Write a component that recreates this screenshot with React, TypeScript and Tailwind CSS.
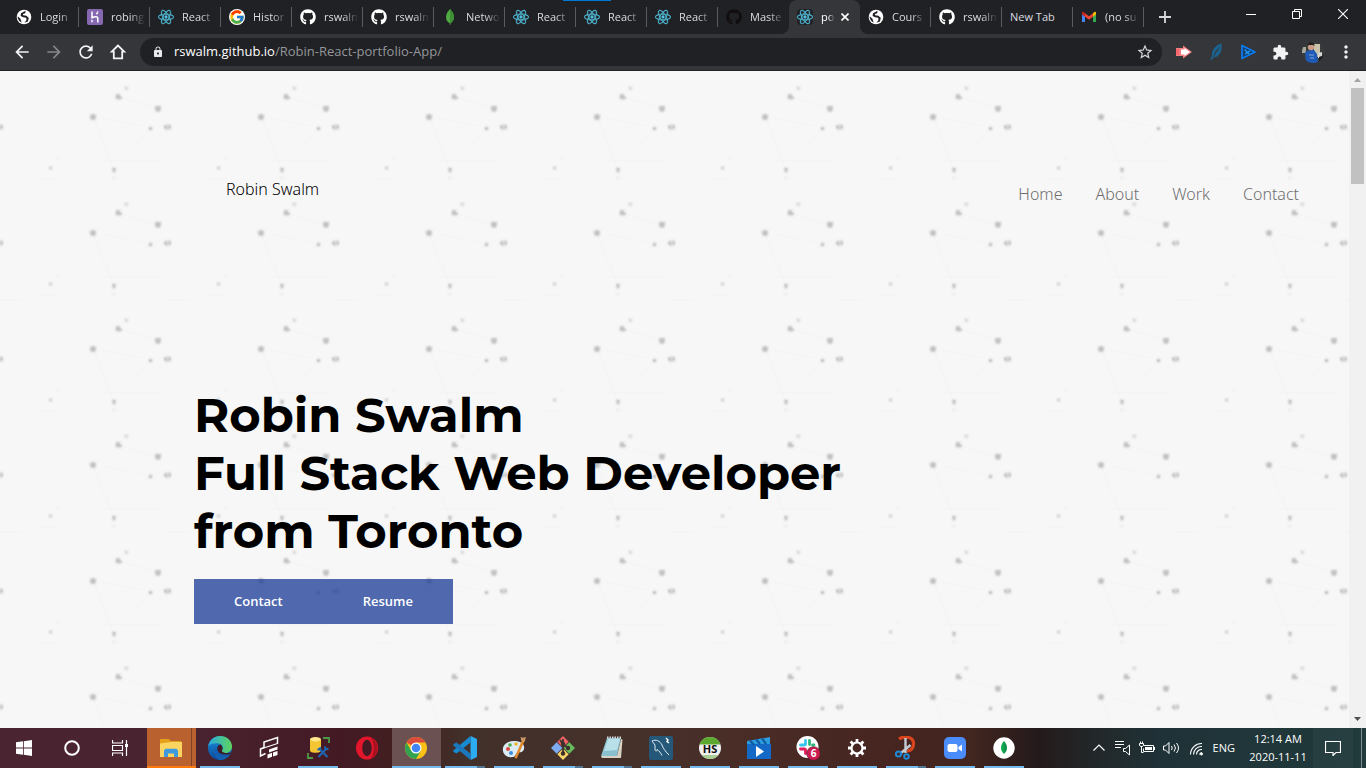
import type { ReactNode } from "react";
import { FaReact, FaGithub } from "react-icons/fa";
import { FcGoogle } from "react-icons/fc";
import { MdArrowBack, MdArrowForward, MdRefresh, MdLock, MdStarBorder, MdExtension, MdMoreVert } from "react-icons/md";

/* ---------- favicons ---------- */

const ReactMark = () => <FaReact className="size-4 stroke-[#53c1de] stroke-[12px] text-[#53c1de]" />;
const GithubMark = () => <FaGithub className="size-4 text-white" />;
const Leaf = ({ className }: { className: string }) => (
  <svg viewBox="0 0 16 16" className={className}>
    <path d="M8 0C5.600 2.600 4 5 4 8.200c0 2.900 1.700 4.800 3.700 6.100L7.800 16h.5l.2-1.700c2-1.500 3.500-3.400 3.500-6.100C12 5 10.400 2.600 8 0z" fill="#4faa41" />
    <path d="M8 0v14.400c2.300-1.600 4-3.400 4-6.200C12 5 10.400 2.600 8 0z" fill="#3f8f35" />
  </svg>
);
const Globe = () => (
  <svg viewBox="0 0 16 16" className="size-4">
    <circle cx="8" cy="8" r="7.300" fill="#fff" />
    <path d="M9.500 1.800 5 4.200 4.600 7l2.600 1.200 3 .6.3 2.200-2 2.800 3.400-1.400.9-3.400-2.300-2.200-3.300-.5-.3-1.300 2.400-.8z" fill="#202124" />
    <path d="M1.600 7.200 4.400 9.700l1.300 3.900A7 7 0 0 1 1.600 7.200z" fill="#202124" />
  </svg>
);
const Heroku = () => (
  <svg viewBox="0 0 16 16" className="size-4">
    <rect width="16" height="16" rx="2" fill="#8668b0" />
    <path d="M5 2.500v6.200c2.600-1.100 5.800-1.500 5.800.6v4.200M10.700 2.500c-.1 1.200-.6 2-1.400 2.800" fill="none" stroke="#fff" strokeWidth="1.500" />
    <path d="M4.300 10.500 6.500 12l-2.200 1.700z" fill="#fff" />
  </svg>
);
const Gmail = () => (
  <svg viewBox="0 0 16 16" className="size-4">
    <path d="M1 4v9h3V7z" fill="#4285f4" />
    <path d="M15 4v9h-3V7z" fill="#34a853" />
    <path d="M12 4.200 13.300 3c.9-.6 1.700 0 1.700 1v1.500l-3 2.300z" fill="#fbbc04" />
    <path d="M4 4.200 2.700 3C1.800 2.400 1 3 1 4v1.500l3 2.300z" fill="#c5221f" />
    <path d="M4 4.200 8 7.300l4-3.100v3.600l-4 3-4-3z" fill="#ea4335" />
  </svg>
);

type Tab = { title: string; icon?: ReactNode; active?: boolean; noLine?: boolean };

const tabs: Tab[] = [
  { title: "Login", icon: <Globe /> },
  { title: "robing", icon: <Heroku /> },
  { title: "React", icon: <ReactMark /> },
  { title: "Histor", icon: <FcGoogle className="size-4 rounded-full bg-white" /> },
  { title: "rswalm", icon: <GithubMark /> },
  { title: "rswalm", icon: <GithubMark /> },
  { title: "Netwo", icon: <Leaf className="size-4" /> },
  { title: "React", icon: <ReactMark /> },
  { title: "React", icon: <ReactMark /> },
  { title: "React", icon: <ReactMark /> },
  { title: "Maste", icon: <FaGithub className="size-4 text-[#120e0f]" />, noLine: true },
  { title: "po", icon: <span className="block rounded-sm bg-[#202124]"><ReactMark /></span>, active: true },
  { title: "Cours", icon: <Globe /> },
  { title: "rswalm", icon: <GithubMark /> },
  { title: "New Tab" },
  { title: "(no su", icon: <Gmail /> },
];

function BrowserTab({ tab }: { tab: Tab }) {
  if (tab.active) {
    return (
      <li className="relative flex h-[34px] w-[71px] items-center rounded-t-lg bg-[#35363a] pl-2 pr-3 text-white">
        <svg viewBox="0 0 8 8" className="absolute -left-2 bottom-0 size-2"><path d="M8 0v8H0a8 8 0 0 0 8-8z" fill="#35363a" /></svg>
        <svg viewBox="0 0 8 8" className="absolute -right-2 bottom-0 size-2"><path d="M0 0v8h8a8 8 0 0 1-8-8z" fill="#35363a" /></svg>
        <span className="mr-2 shrink-0">{tab.icon}</span>
        <span className="mr-1.5 w-[14px] shrink-0 whitespace-nowrap [mask-image:linear-gradient(to_right,black_50%,transparent)]">{tab.title}</span>
        <button aria-label="Close tab" className="shrink-0">
          <svg viewBox="0 0 8 8" className="size-2"><path d="M.5.500l7 7M7.500.500l-7 7" stroke="#fff" strokeWidth="1.600" /></svg>
        </button>
      </li>
    );
  }
  return (
    <li className="flex h-[34px] w-[71px] items-center">
      <a href="#tab" className="flex min-w-0 flex-1 items-center gap-2 pl-2">
        {tab.icon && <span className="shrink-0">{tab.icon}</span>}
        <span className={`min-w-0 flex-1 whitespace-nowrap ${tab.icon ? "[mask-image:linear-gradient(to_right,black_50%,transparent_90%)]" : ""}`}>{tab.title}</span>
      </a>
      <span className={`h-5 w-px ${tab.noLine ? "" : "bg-[#5a5b5f]"}`} />
    </li>
  );
}

function TabStrip() {
  return (
    <div className="relative flex h-[34px] items-center bg-[#202124] pl-2 text-[11px] text-[#dadce0]">
      <span className="absolute left-[563px] top-0 h-px w-12 bg-[#0078d7]" />
      <ul className="flex">{tabs.map((t, i) => <BrowserTab key={i} tab={t} />)}</ul>
      <button aria-label="New tab" className="ml-[15px]">
        <svg viewBox="0 0 12 12" className="size-3"><path d="M6 0v12M0 6h12" stroke="#d5d7da" strokeWidth="1.800" /></svg>
      </button>
      <div className="ml-auto flex h-full items-start">
        <button aria-label="Minimize" className="flex h-7 w-[46px] items-center justify-center">
          <svg viewBox="0 0 10 10" className="size-[10px]"><path d="M0 5.500h10" stroke="#fff" /></svg>
        </button>
        <button aria-label="Restore" className="flex h-7 w-[46px] items-center justify-center">
          <svg viewBox="0 0 10 10" className="size-[10px]"><path d="M.5 2.500h7v7h-7zM2.500 2.500v-2h7v7h-2" fill="none" stroke="#fff" /></svg>
        </button>
        <button aria-label="Close window" className="flex h-7 w-[46px] items-center justify-center">
          <svg viewBox="0 0 10 10" className="size-[10px]"><path d="M0 0l10 10M10 0L0 10" stroke="#fff" strokeWidth="1.100" /></svg>
        </button>
      </div>
    </div>
  );
}

function Toolbar() {
  return (
    <div className="flex h-[37px] items-center border-b border-[#252224] bg-[#35363a] pl-3 pr-[10px]">
      <div className="flex items-center gap-3 text-[#f1f3f4]">
        <button aria-label="Back"><MdArrowBack className="size-5" /></button>
        <button aria-label="Forward"><MdArrowForward className="size-5 text-[#85868a]" /></button>
        <button aria-label="Reload"><MdRefresh className="size-5" /></button>
        <button aria-label="Home">
          <svg viewBox="0 0 20 20" className="size-5"><path d="M10 3.500 3.800 9.700h2v6.600h8.400V9.700h2z" fill="none" stroke="currentColor" strokeWidth="1.800" /></svg>
        </button>
      </div>
      <div className="ml-3 mr-3 flex h-7 flex-1 items-center rounded-full bg-[#202124] pl-3 pr-2">
        <MdLock className="size-3 text-[#e8eaed]" />
        <div className="ml-[10px] flex-1 text-[13px] text-[#94969a]">
          <span className="text-white">rswalm.github.io</span>/Robin-React-portfolio-App/
        </div>
        <button aria-label="Bookmark"><MdStarBorder className="size-[18px] text-[#d5d7da]" /></button>
      </div>
      <div className="flex items-center gap-3">
        <button aria-label="Cast extension">
          <svg viewBox="0 0 20 20" className="size-5"><path d="M2 6h7V3.500l9 6.500-9 6.500V14H2z" fill="#f37e80" /><path d="M7 7.500h3.500V6L16 10l-5.500 4v-1.500H7z" fill="#fff" /><path d="M2 7h3v6H2z" fill="#f9676c" /></svg>
        </button>
        <button aria-label="Feather extension">
          <svg viewBox="0 0 20 20" className="size-5"><path d="M15 2c-5 1.500-9 6-8.500 10.500L5 18l2.600-3.200C13 15 16 9.500 15 2z" fill="#1c6391" stroke="#1c6391" /><path d="M13.500 5 7 15M9 9l.5 3M11 7l1 3" stroke="#35363a" strokeWidth=".8" /></svg>
        </button>
        <button aria-label="Player extension">
          <svg viewBox="0 0 20 20" className="size-5"><path d="M4 3.500v13L17 10z" fill="#173d6c" stroke="#0a7cf4" strokeWidth="1.700" strokeLinejoin="round" /><path d="M6.500 7.500 11 12M7 12l5-3" stroke="#1ea2f5" strokeWidth="1.200" /></svg>
        </button>
        <button aria-label="Extensions" className="flex size-5 items-center justify-center"><MdExtension className="size-[17px] text-[#f1f3f4]" /></button>
        <button aria-label="Profile">
          <svg viewBox="0 0 22 22" className="size-[22px]">
            <clipPath id="avatar"><circle cx="11" cy="11" r="11" /></clipPath>
            <g clipPath="url(#avatar)">
              <path d="M0 0h22v22H0z" fill="#373b39" />
              <path d="M12 3h6v13h-6z" fill="#c9c3aa" />
              <path d="M0 6h4v6H0z" fill="#a9a69a" />
              <path d="M16 12l4-1v6h-4z" fill="#d9d6cf" />
              <path d="M3 11l5-2h4l3 4 1 9H4z" fill="#1f5bb5" />
              <circle cx="9" cy="6" r="3.200" fill="#c99b85" />
              <path d="M5.500 5C5 0 13 0 12.500 5l-1.500-1H7z" fill="#231d1d" />
              <path d="M7 14h5M8 17h4" stroke="#7ea6e0" />
              <path d="M17 16l5-2v9h-5z" fill="#1c1f20" />
            </g>
          </svg>
        </button>
        <button aria-label="Menu"><MdMoreVert className="size-5 text-[#f1f3f4]" /></button>
      </div>
    </div>
  );
}

/* ---------- portfolio page ---------- */

function ParticleBackground() {
  return (
    <svg className="absolute inset-0 -z-10 size-full" aria-hidden="true">
      <defs>
        <filter id="soft"><feGaussianBlur stdDeviation="1" /></filter>
        <pattern id="particles" width="168" height="116" patternUnits="userSpaceOnUse">
          <g stroke="#f3f3f3" fill="none">
            <path d="M93 46l26-20 39 12M93 46l21 53M150 57l-20 24M126 17l-8 9M102 47l40 8M0 113h22M38 108h20M100 90h64" strokeWidth=".8" />
          </g>
          <g fill="#c0c0c0" filter="url(#soft)">
            <path d="M115.500 24l3-1.500 1.500 2 2.500 2.500-2 1.500-4.500-.5z" />
            <path d="M124 16h4v2l-2 1z" fill="#cdcdcd" />
            <path d="M155 35h6l-.5 5-2.500 1-2.500-1z" />
            <circle cx="93" cy="46" r="3" />
            <circle cx="150.500" cy="57.500" r="1.700" fill="#b4b4b4" />
            <path d="M164 54.500h2l2-1.500v6.500l-2-1.500-2-.5z" />
            <path d="M0 53l3 1.500v3L0 59z" />
            <circle cx="50.500" cy="97" r="1.700" fill="#cccccc" />
            <path d="M112 97h4l-1 4.500h-2z" fill="#bcbcbc" />
            <path d="M57 87h1v2h-1zM108 88l3 4M111 107l3 1 2-2M168 2l-1 1" fill="#dedede" />
          </g>
        </pattern>
      </defs>
      <rect width="100%" height="100%" fill="url(#particles)" />
    </svg>
  );
}

function PortfolioPage() {
  const links = ["Home", "About", "Work", "Contact"];
  return (
    <main className="relative isolate flex-1 bg-[#f7f7f7]">
      <ParticleBackground />
      <header className="flex items-start justify-between pl-[226px] pr-[50px] pt-[106px] font-['Noto_Sans','Open_Sans',sans-serif] font-light">
        <a href="#top" className="text-base text-black">Robin Swalm</a>
        <nav className="mt-[5px] flex gap-[33px] text-base text-[#6f6f6f]">
          {links.map((l) => <a key={l} href={`#${l.toLowerCase()}`}>{l}</a>)}
        </nav>
      </header>
      <section className="pl-[194px] pt-[180px]">
        <h1 className="font-['Montserrat','Inter',sans-serif] text-5xl/[58px] font-bold text-black">
          Robin Swalm<br />Full Stack Web Developer<br />from Toronto
        </h1>
        <div className="mt-[19px] inline-flex bg-[#20409a]/78 text-[13px] font-semibold leading-[45px] text-white">
          <a href="#contact" className="px-10">Contact</a>
          <a href="#resume" className="px-10">Resume</a>
        </div>
      </section>
    </main>
  );
}

function ScrollTrack() {
  return (
    <div className="flex w-[17px] flex-col items-center bg-[#f1f1f1]">
      <svg viewBox="0 0 17 17" className="size-[17px]"><path d="M5 11h7L8.500 7z" fill="#a3a3a3" /></svg>
      <div className="h-24 w-[13px] bg-[#c1c1c1]" />
      <svg viewBox="0 0 17 17" className="mt-auto size-[17px]"><path d="M5 6h7l-3.500 4z" fill="#505050" /></svg>
    </div>
  );
}

/* ---------- taskbar ---------- */

const Svg = ({ children }: { children: ReactNode }) => <svg viewBox="0 0 24 24" className="size-6">{children}</svg>;

type App = { name: string; icon: ReactNode; state?: "open" | "stacked" | "focus" | "alert" };

const apps: App[] = [
  {
    name: "File Explorer", state: "alert",
    icon: <Svg><path d="M1 3h9l1.500 2H22v3H1z" fill="#e3a21a" /><path d="M1 7.500 12 6h11v15H1z" fill="#fcd462" /><path d="M5 21v-6.500l1.500-1.700h11l1.500 1.700V21h-4v-3.500H9V21z" fill="#3d9ade" /></Svg>,
  },
  {
    name: "Edge", state: "open",
    icon: (
      <Svg>
        <defs>
          <linearGradient id="edgeTop" x1="0" x2="1"><stop stopColor="#2aa9e0" /><stop offset="1" stopColor="#5dd45c" /></linearGradient>
          <linearGradient id="edgeLow" x1="0" x2="0" y1="0" y2="1"><stop stopColor="#1a8fdc" /><stop offset="1" stopColor="#0c4a9c" /></linearGradient>
        </defs>
        <circle cx="12" cy="12" r="12" fill="url(#edgeLow)" />
        <path d="M.2 10.500C1.500 3.500 6.500 0 12 0c7 0 12 5 12 10.500 0 4-3 6.500-6.500 6.500-3 0-4.500-1.300-3.500-2.700 1.800-2.400.5-7-5-7-4 0-7.400 1.200-8.800 3.200z" fill="url(#edgeTop)" />
        <path d="M9 9.500c-2.800 4 .5 11.200 8.500 10 2-.3 3.700-1 4.700-1.600C19.500 22 16 24 12 24 6.500 22.500 5 14 9 9.500z" fill="#155fb0" />
        <path d="M14 14.300c1.500-2.200.3-5.200-2-5.900-2.200 1-3.500 3.500-2.400 6.200 1.300 3.300 6.400 5 12.600 3.300l.8-1.600C18 18.500 12.800 16 14 14.300z" fill="#3f1b25" />
      </Svg>
    ),
  },
  {
    name: "Slides",
    icon: <Svg><path d="M8.500 17.500 3.500 20v-7L7 11.500V6L20.500 1.500V8" fill="none" stroke="#fff" strokeWidth="1.500" /><path d="M3.500 13 20.500 7.500" stroke="#fff" strokeWidth="1.200" /><path d="M12 13.500 20.500 10.500v3L12 16.500zM10.500 18.500l4.500-1.700v4L10.500 22.500zM16 16.500l4.500-1.600v4L16 20.500z" fill="#fff" /></Svg>,
  },
  {
    name: "Database tools", state: "open",
    icon: <Svg><path d="M17 2h6v5M7 22H2v-5" fill="none" stroke="#4b9b46" strokeWidth="1.800" /><path d="M4 3v11.500c0 3 11 3 11 0V3z" fill="#f3c532" /><ellipse cx="9.500" cy="3.200" rx="5.500" ry="2.200" fill="#ffe58b" /><path d="M13 12.500 21.500 21M20.500 12.500 12.500 21M11.500 14l3.500-2.500M18.500 10.500l1.500 2.500h2.500" stroke="#1c66b5" strokeWidth="2" fill="none" /></Svg>,
  },
  {
    name: "Opera",
    icon: <Svg><ellipse cx="12" cy="12" rx="11" ry="11.500" fill="#e3162b" /><path d="M15 1.200A11 11.500 0 0 1 15 22.800c5-3 5-18.600 0-21.600z" fill="#a80f1f" /><ellipse cx="12" cy="12" rx="4.800" ry="8.300" fill="#431b25" /></Svg>,
  },
  {
    name: "Chrome", state: "focus",
    icon: <Svg><circle cx="12" cy="12" r="11" fill="#fbc116" /><path d="M12 12 2.500 6.500A11 11 0 0 1 21.500 6.500H12z" fill="#dd4b3e" /><path d="M2.500 6.500A11 11 0 0 0 12 23l4.800-8.200L12 12 7.200 14.700z" fill="#31a350" /><circle cx="12" cy="12" r="5.500" fill="#fff" /><circle cx="12" cy="12" r="4.300" fill="#4285f4" /></Svg>,
  },
  {
    name: "VS Code", state: "stacked",
    icon: <Svg><path d="M17.500 0 24 3v18l-6.500 3V0z" fill="#2cabf1" /><path d="M17.500 0v6.500L3.500 17.500.300 15.700v-1.300z" fill="#168bd2" /><path d="M17.500 24v-6.500L3.500 6.500.300 8.300v1.300z" fill="#1c78bd" /></Svg>,
  },
  {
    name: "Paint", state: "open",
    icon: <Svg><path d="M1 15C0 9 5 5 12 5c7 0 11 3 10 8-1 4-5 3-7 4-2 1.500-1 4-5 4-4 1-8.500-2-9-6z" fill="#dcebf5" /><circle cx="6" cy="13" r="2" fill="#d84a3b" /><circle cx="8" cy="9" r="1.800" fill="#4eac48" /><circle cx="14" cy="8" r="1.800" fill="#efb52e" /><circle cx="9" cy="17" r="2" fill="#398ddb" /><path d="M20 4 12.500 22l2.300.5L22.500 5z" fill="#e18a2c" /><path d="M19.500 5 18.500 1l2.500.7 3-.7-1.500 5z" fill="#c99865" /></Svg>,
  },
  {
    name: "Git Bash", state: "stacked",
    icon: <Svg><path d="M12 0l5.700 5.700L12 11.400 6.300 5.700z" fill="#ef6265" /><path d="M5.700 6.300l5.700 5.700-5.700 5.700L0 12z" fill="#7daaf0" /><path d="M18.300 6.300 24 12l-5.700 5.700-5.700-5.700z" fill="#68bc5c" /><path d="M12 12.600l5.700 5.700L12 24l-5.700-5.700z" fill="#f8d568" /><path d="M12 3v15M9 4l3 4 5 4" stroke="#3e312d" strokeWidth="1.800" fill="none" /><circle cx="12" cy="17.500" r="2.200" fill="#3e312d" /><circle cx="12" cy="8" r="2.200" fill="#3e312d" /><circle cx="17" cy="12" r="2.200" fill="#3e312d" /></Svg>,
  },
  {
    name: "Notepad", state: "stacked",
    icon: <Svg><path d="M7 2h14l-4 18H1z" fill="#8bc1cf" /><path d="M8 3h12l-3 11-13 1z" fill="#b9dfe8" /><path d="M7 1.500h14" stroke="#d8dde0" strokeWidth="1.800" strokeDasharray="1.500 1" /><path d="M1 20h16l4-17 1.500.5L21 22H2z" fill="#d9d3c3" /></Svg>,
  },
  {
    name: "MySQL Workbench", state: "open",
    icon: <Svg><rect width="24" height="24" rx="2" fill="#255779" /><path d="M3 5c4-2 8 0 10 4 1 3 3 6 7 10M3 5l3 4 0 5c1 2 2 1 2-.5 2 1 4 4 5 6" fill="none" stroke="#e3edf4" strokeWidth="1" /><path d="M17 2l2 2-1 1.500 2 1.500" stroke="#fff" strokeWidth="1.400" fill="none" /></Svg>,
  },
  {
    name: "HeidiSQL", state: "open",
    icon: <Svg><circle cx="12" cy="12" r="11" fill="#efefef" /><path d="M1.400 8.500a11.200 11.200 0 0 1 21.200 0z" fill="#5ba92f" /><path d="M3.500 19a11 11 0 0 0 17 0z" fill="#a9cf94" /><text x="12" y="16.500" textAnchor="middle" fontSize="11" fontWeight="700" fontFamily="Open Sans, sans-serif" fill="#111">HS</text></Svg>,
  },
  {
    name: "Video Editor", state: "open",
    icon: <Svg><path d="M0 8h24v15H0z" fill="#1469c7" /><path d="M0 5 23 1v7H0z" fill="#2c9ce0" /><path d="M3 4.500 7 9M9 3.300 13 8M15 2.300 19 8" stroke="#125aa0" strokeWidth="2.200" /><path d="M9 10v11l8-5.500z" fill="#fff" /></Svg>,
  },
  {
    name: "Slack", state: "open",
    icon: (
      <Svg>
        <circle cx="11.500" cy="11" r="11" fill="#fff" />
        <g strokeWidth="2.800" strokeLinecap="round"><path d="M9.500 4.500v4M4.500 9h4" stroke="#36c5f0" /><path d="M13.500 4.500v4M18 9h-1.500" stroke="#2eb67d" /><path d="M4.500 13h4M9.500 13.500v4" stroke="#e01e5a" /><path d="M14 13v1" stroke="#ecb22e" /></g>
        <circle cx="17.500" cy="17.500" r="6.800" fill="#cb1d52" stroke="#571225" strokeWidth=".6" />
        <text x="17.500" y="21" textAnchor="middle" fontSize="10" fontWeight="700" fontFamily="Open Sans, sans-serif" fill="#fff">6</text>
      </Svg>
    ),
  },
  {
    name: "Settings", state: "open",
    icon: <Svg><circle cx="12" cy="12" r="5.500" fill="none" stroke="#fff" strokeWidth="2.200" /><path d="M12 3v3M12 18v3M3 12h3M18 12h3M5.600 5.600l2.200 2.200M16.200 16.200l2.200 2.200M5.600 18.400l2.200-2.200M16.200 7.800l2.200-2.200" stroke="#fff" strokeWidth="2.800" /></Svg>,
  },
  {
    name: "Snipping Tool", state: "stacked",
    icon: <Svg><path d="M5 3C9 0 19 0 19.500 7c.3 5-2.500 8-6.500 8" fill="none" stroke="#d8451d" strokeWidth="3.200" /><path d="M11.500 2v15M16.500 9 7 17" stroke="#c4ccd2" strokeWidth="2.400" /><circle cx="4.500" cy="18" r="2.600" fill="none" stroke="#2089d3" strokeWidth="2" /><circle cx="12.500" cy="20.500" r="2.300" fill="none" stroke="#2089d3" strokeWidth="2" /></Svg>,
  },
  {
    name: "Zoom", state: "open",
    icon: <Svg><rect x="1" y="1" width="22" height="22" rx="5" fill="#4a8cfa" /><rect x="4.500" y="8" width="10" height="8" rx="2" fill="#fff" /><path d="M15.500 11 19 8.500v7L15.500 13z" fill="#fff" /></Svg>,
  },
  {
    name: "MongoDB Compass", state: "open",
    icon: <Svg><circle cx="12" cy="12" r="10.700" fill="#fff" /><path d="M12 5c-2.200 2.500-3 4.500-3 7 0 2.300 1 4 3 6z" fill="#10aa50" /><path d="M12 5c2.200 2.500 3 4.500 3 7 0 2.300-1 4-3 6z" fill="#12924a" /></Svg>,
  },
];

function TaskButton({ app }: { app: App }) {
  const bg = app.state === "alert" ? "bg-[#b9612f]" : app.state === "focus" ? "bg-[#6b5151]" : "";
  return (
    <li className={`relative h-10 w-[49px] ${bg}`}>
      <button aria-label={app.name} className="flex size-full items-center pl-3">{app.icon}</button>
      {app.state === "alert" && <><span className="absolute inset-y-0 right-1 w-px bg-[#7e4224]" /><span className="absolute inset-x-0 bottom-0 h-0.5 bg-[#ff7a0c]" /></>}
      {app.state === "focus" && <span className="absolute inset-x-0 bottom-0 h-0.5 bg-[#76b9ed]" />}
      {app.state === "open" && <span className="absolute bottom-0 left-1 h-0.5 w-10 bg-[#76b9ed]" />}
      {app.state === "stacked" && <span className="absolute bottom-0 left-1 flex h-0.5 w-10"><span className="w-8 bg-[#76b9ed]" /><span className="w-2 bg-[#517694]" /></span>}
    </li>
  );
}

function Taskbar() {
  const tray = "fill-none stroke-white";
  return (
    <footer className="flex h-10 items-center bg-[linear-gradient(to_right,#4b2431,#4a2330_14%,#431a24_25%,#42201f_30%,#42302a_34%,#46302a_47%,#4a2c26_55%,#46241f_66%,#432620_71%,#241a1b_76%,#222729_80%,#1f3237_85%,#213a3c)] text-[11px] text-white">
      <div className="mr-[3px] flex">
        <button aria-label="Start" className="flex h-10 w-12 items-center justify-center">
          <svg viewBox="0 0 16 16" className="size-4" fill="#fff"><path d="M0 2.300 7 1.300v6.200H0zM7.800 1.200 16 0v7.500H7.800zM0 8.400h7v6.300l-7-1zM7.800 8.400H16V16l-8.200-1.200z" /></svg>
        </button>
        <button aria-label="Cortana" className="flex h-10 w-12 items-center justify-center">
          <svg viewBox="0 0 16 16" className="size-4"><circle cx="8" cy="8" r="6.800" fill="none" stroke="#fff" strokeWidth="2" /></svg>
        </button>
        <button aria-label="Task View" className="flex h-10 w-12 items-center justify-center">
          <svg viewBox="0 0 16 16" className="size-4"><path d="M.5 0v3h10V0M.5 16v-3h10v3M.5 5.500h10v5H.5zM14.500 0v16" fill="none" stroke="#fff" strokeWidth="1.200" /><path d="M13 4h3v3h-3z" fill="#fff" /></svg>
        </button>
      </div>
      <ul className="flex">{apps.map((a) => <TaskButton key={a.name} app={a} />)}</ul>
      <div className="ml-auto flex items-center">
        <svg viewBox="0 0 12 12" className={`mr-[10px] size-3 ${tray}`}><path d="M.5 8.500 6 3l5.500 5.500" strokeWidth="1.200" /></svg>
        <div className="flex gap-2">
          <svg viewBox="0 0 16 16" className={`size-4 ${tray}`}><path d="M0 1.500h9M0 4.500h9M0 7.500h6M8.500 8.500h2l4-3.500v10l-4-3.500h-2z" /></svg>
          <svg viewBox="0 0 16 16" className={`size-4 ${tray}`}><path d="M5 5.500h9.500v6H4.500v-3M15.500 7v3M2.500 6v6.500h2M.5 3.500h4v2l-2 1.500-2-1.500zM1.500 1.500v2M3.500 1.500v2" /><path d="M6 7h7v3H6z" fill="#fff" stroke="none" /></svg>
          <svg viewBox="0 0 16 16" className={`size-4 ${tray}`}><path d="M.5 6h2L6 2.500v11L2.500 10h-2zM8.500 6q1.500 2 0 4M11 4.500q3 3.500 0 7M13.500 3q4 5 0 10" /></svg>
          <svg viewBox="0 0 16 16" className={`ml-0.5 size-4 ${tray}`}><path d="M1.500 14.500A11 11 0 0 1 13 3.500M4.500 14.500A8 8 0 0 1 13 6.500M7.500 14.500A5 5 0 0 1 13 9.500M10.500 14.500A3 3 0 0 1 13 12.500" strokeWidth="1.100" /><circle cx="12.500" cy="14" r="1" fill="#fff" /></svg>
        </div>
        <span className="ml-2">ENG</span>
        <div className="ml-2 w-[70px] whitespace-nowrap text-center leading-[18px]">
          <div>12:14 AM</div>
          <div>2020-11-11</div>
        </div>
        <button aria-label="Notifications" className="flex h-10 w-10 items-center justify-center bg-white/3">
          <svg viewBox="0 0 16 16" className={`size-4 ${tray}`}><path d="M.5 1.500h15v11H11L8 15.500v-3H.5z" strokeWidth="1.200" /></svg>
        </button>
        <span className="ml-2 mr-1 h-10 w-px bg-[#7c8b8c]" />
      </div>
    </footer>
  );
}

export default function App() {
  return (
    <div className="flex min-h-screen flex-col bg-[#f7f7f7] font-['Open_Sans',sans-serif]">
      <TabStrip />
      <Toolbar />
      <div className="flex flex-1">
        <PortfolioPage />
        <ScrollTrack />
      </div>
      <Taskbar />
    </div>
  );
}
